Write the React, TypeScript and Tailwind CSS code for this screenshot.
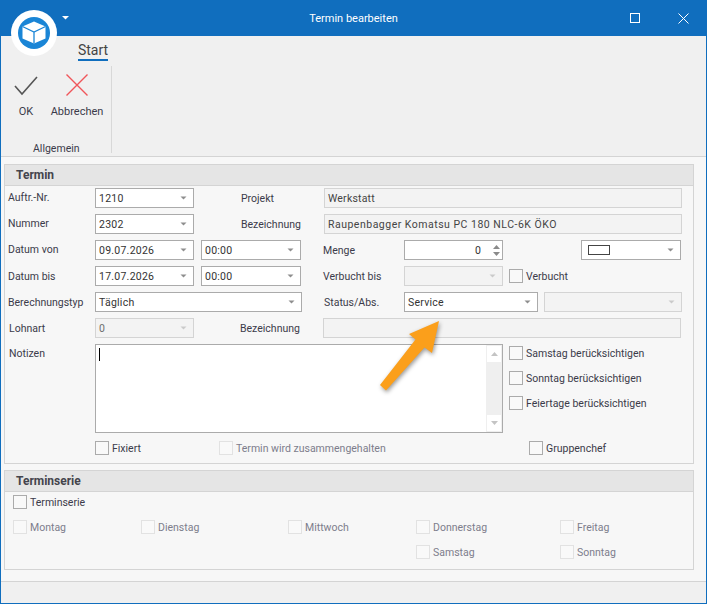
import React from "react";

const Arrow = () => (
  <svg width="8" height="4" viewBox="0 0 8 4" className="shrink-0">
    <path d="M.5.500h6L3.500 3.500z" fill="#8e8e8e" />
  </svg>
);

const Combo = ({
  w,
  value = "",
  disabled = false,
  children,
}: {
  w: string;
  value?: string;
  disabled?: boolean;
  children?: React.ReactNode;
}) => (
  <div
    className={`${w} h-5 shrink-0 flex items-center justify-between pl-[3px] pr-[5px] border tracking-[0.25px] ${
      disabled ? "border-[#d4d4d4] bg-[#f3f3f3] text-[#6d6d6d]" : "border-[#ababab] bg-white text-[#333]"
    }`}
  >
    {children ?? <span className="pt-[2px]">{value}</span>}
    <span className={disabled ? "opacity-40" : ""}>
      <Arrow />
    </span>
  </div>
);

const ReadOnly = ({ w, value = "", wide = false }: { w: string; value?: string; wide?: boolean }) => (
  <div
    className={`${w} h-5 shrink-0 flex items-center px-[3px] border border-[#d4d4d4] bg-[#f3f3f3] text-[#444] ${
      wide ? "tracking-[0.5px]" : "tracking-[0.2px]"
    }`}
  >
    <span className="pt-[2px]">{value}</span>
  </div>
);

const Check = ({ label, disabled = false, w = "" }: { label: string; disabled?: boolean; w?: string }) => (
  <div className={`${w} flex items-center gap-[3px] ${disabled ? "text-[#7d7d8c]" : "text-[#3b3b4a]"}`}>
    <span className={`w-[14px] h-[14px] shrink-0 border ${disabled ? "border-[#e2e2e2] bg-[#f9f9f9]" : "border-[#ababab] bg-[#f9f9f9]"}`} />
    <span className="pt-[2px]">{label}</span>
  </div>
);

const Label = ({ w, text }: { w: string; text: string }) => <span className={`${w} shrink-0 text-[#3b3b4a]`}>{text}</span>;

const SectionHead = ({ title }: { title: string }) => (
  <div className="h-[21px] pl-[11px] flex items-center bg-[#e5e5e5] border-b border-[#d4d4d4] text-[12px] font-bold text-[#44444c]">{title}</div>
);

export default function App() {
  return (
    <div
      className="relative w-[707px] h-[604px] overflow-hidden flex flex-col bg-[#f7f7f7] border-x border-b border-[#106ebe] text-[10.5px] leading-none"
      style={{ fontFamily: "Roboto, Tahoma, sans-serif" }}
    >
      {/* title bar */}
      <div className="h-9 shrink-0 -mx-px bg-[#106ebe] text-white text-[11px] flex items-center justify-center relative">
        <span>Termin bearbeiten</span>
        <svg width="8" height="4" viewBox="0 0 8 4" className="absolute left-[62px] top-4">
          <path d="M0 0h7L3.5 3.5z" fill="#fff" />
        </svg>
        <span className="absolute left-[630px] top-[13px] w-[10px] h-[10px] border border-white" />
        <svg width="11" height="11" viewBox="0 0 11 11" className="absolute left-[678px] top-[13px]">
          <path d="M.5.5l10 10M10.500.5l-10 10" stroke="#fff" strokeWidth="1" />
        </svg>
      </div>

      {/* ribbon */}
      <div className="h-[121px] shrink-0 bg-[#f0f0f0] border-b border-[#d4d4d4] relative">
        <div className="ml-[77px] w-[30px] h-[25px] flex flex-col items-center justify-end">
          <span className="text-[14px] text-[#444] mb-[2px]">Start</span>
          <span className="w-full h-[2px] bg-[#106ebe]" />
        </div>
        <div className="flex mt-[5px]">
          <div className="w-[111px] h-[87px] border-r border-[#d8d8d8] flex flex-col">
            <div className="flex pl-[13px] pt-[9px] gap-[13px] items-start text-[11px]">
              <div className="w-6 flex flex-col items-center gap-[10px]">
                <svg width="24" height="21" viewBox="0 0 24 21">
                  <path d="M1 11l7 8L23 2" fill="none" stroke="#555" strokeWidth="1.6" />
                </svg>
                <span className="text-[#3b3b4a]">OK</span>
              </div>
              <div className="w-[52px] flex flex-col items-center gap-[10px] -mt-[1px]">
                <svg width="22" height="22" viewBox="0 0 22 22">
                  <path d="M.5.5l21 21M21.500.5l-21 21" fill="none" stroke="#f0555a" strokeWidth="1.4" />
                </svg>
                <span className="text-[#3b3b4a]">Abbrechen</span>
              </div>
            </div>
            <span className="mt-auto -mb-[1px] ml-[32px] text-[#3b3b4a]">Allgemein</span>
          </div>
        </div>
      </div>

      {/* content */}
      <div className="flex-1 flex flex-col px-[3px] pt-[7px] gap-[6px]">
        <div className="w-[690px] h-[300px] border border-[#d4d4d4] flex flex-col">
          <SectionHead title="Termin" />
          <div className="pl-[3px] pt-[2px] flex flex-col gap-[6px]">
            <div className="flex items-center">
              <Label w="w-[87px]" text="Auftr.-Nr." />
              <Combo w="w-[99px]" value="1210" />
              <span className="ml-[47px] w-[83px] pt-[2px] shrink-0 text-[#3b3b4a]">Projekt</span>
              <ReadOnly w="w-[358px]" value="Werkstatt" />
            </div>
            <div className="flex items-center">
              <Label w="w-[87px]" text="Nummer" />
              <Combo w="w-[99px]" value="2302" />
              <span className="ml-[47px] w-[83px] pt-[2px] shrink-0 text-[#3b3b4a]">Bezeichnung</span>
              <ReadOnly w="w-[358px]" value="Raupenbagger Komatsu PC 180 NLC-6K ÖKO" wide />
            </div>
            <div className="flex items-center">
              <Label w="w-[87px]" text="Datum von" />
              <Combo w="w-[99px]" value="09.07.2026" />
              <span className="w-[7px]" />
              <Combo w="w-[100px]" value="00:00" />
              <span className="ml-[22px] w-[81px] pt-[2px] shrink-0 text-[#3b3b4a]">Menge</span>
              <div className="w-[99px] h-5 shrink-0 flex items-center justify-end border border-[#ababab] bg-white text-[#333]">
                <span className="mr-[9px] pt-[2px]">0</span>
                <span className="w-3 flex flex-col gap-[3px] items-center">
                  <svg width="7" height="4" viewBox="0 0 7 4"><path d="M0 4h7L3.500 0z" fill="#8a8a8a" /></svg>
                  <svg width="7" height="4" viewBox="0 0 7 4"><path d="M0 0h7L3.500 4z" fill="#8a8a8a" /></svg>
                </span>
              </div>
              <span className="w-[78px] shrink-0" />
              <Combo w="w-[100px]">
                <span className="ml-[3px] w-[22px] h-[10px] border border-[#444] bg-white" />
              </Combo>
            </div>
            <div className="flex items-center">
              <Label w="w-[87px] pt-[2px]" text="Datum bis" />
              <Combo w="w-[99px]" value="17.07.2026" />
              <span className="w-[7px]" />
              <Combo w="w-[100px]" value="00:00" />
              <span className="ml-[22px] w-[81px] pt-[2px] shrink-0 text-[#3b3b4a]">Verbucht bis</span>
              <Combo w="w-[99px]" disabled />
              <span className="w-[6px]" />
              <Check label="Verbucht" />
            </div>
            <div className="flex items-center">
              <Label w="w-[87px] pt-[2px]" text="Berechnungstyp" />
              <Combo w="w-[207px]" value="Täglich" />
              <span className="ml-[22px] w-[80px] pt-[2px] shrink-0 text-[#3b3b4a]">Status/Abs.</span>
              <Combo w="w-[134px]" value="Service" />
              <span className="w-[6px]" />
              <Combo w="w-[138px]" disabled />
            </div>
            <div className="flex items-center">
              <span className="w-[87px] pl-px pt-[2px] shrink-0 text-[#3b3b4a]">Lohnart</span>
              <Combo w="w-[99px]" value="0" disabled />
              <span className="ml-[46px] w-[83px] pt-[2px] shrink-0 text-[#3b3b4a]">Bezeichnung</span>
              <ReadOnly w="w-[358px]" />
            </div>
            <div className="flex">
              <span className="w-[87px] pl-px shrink-0 text-[#3b3b4a] pt-[5px]">Notizen</span>
              <div className="w-[408px] h-[89px] shrink-0 border border-[#ababab] bg-white flex justify-between">
                <span className="ml-[3px] mt-[3px] w-px h-[13px] bg-black" />
                <div className="w-[16px] bg-[#efefef] flex flex-col justify-between">
                  <span className="h-[16px] bg-white m-px flex items-center justify-center">
                    <svg width="7" height="4" viewBox="0 0 7 4"><path d="M0 4h7L3.500 0z" fill="#c4c4c4" /></svg>
                  </span>
                  <span className="h-[16px] bg-white m-px flex items-center justify-center">
                    <svg width="7" height="4" viewBox="0 0 7 4"><path d="M0 0h7L3.500 4z" fill="#c4c4c4" /></svg>
                  </span>
                </div>
              </div>
              <div className="ml-[6px] pt-[2px] flex flex-col gap-[11px]">
                <Check label="Samstag berücksichtigen" />
                <Check label="Sonntag berücksichtigen" />
                <Check label="Feiertage berücksichtigen" />
              </div>
            </div>
            <div className="flex items-center mt-[2px] pl-[87px]">
              <Check w="w-[124px]" label="Fixiert" />
              <Check w="w-[310px]" label="Termin wird zusammengehalten" disabled />
              <Check label="Gruppenchef" />
            </div>
          </div>
        </div>

        <div className="w-[690px] h-[100px] border border-[#d4d4d4] flex flex-col">
          <SectionHead title="Terminserie" />
          <div className="pl-[8px] pt-[3px] flex flex-col gap-[11px]">
            <Check label="Terminserie" />
            <div className="flex">
              <Check w="w-[128px]" label="Montag" disabled />
              <Check w="w-[147px]" label="Dienstag" disabled />
              <Check w="w-[128px]" label="Mittwoch" disabled />
              <Check w="w-[144px]" label="Donnerstag" disabled />
              <Check label="Freitag" disabled />
            </div>
            <div className="flex pl-[403px]">
              <Check w="w-[144px]" label="Samstag" disabled />
              <Check label="Sonntag" disabled />
            </div>
          </div>
        </div>
      </div>

      {/* status bar */}
      <div className="h-[22px] shrink-0 bg-[#f0f0f0] border-t border-[#d4d4d4]" />

      {/* logo over title bar and ribbon */}
      <svg width="46" height="46" viewBox="0 0 46 46" className="absolute left-[10px] top-[10px]">
        <circle cx="23" cy="23" r="23" fill="#fff" />
        <circle cx="23" cy="23" r="16" fill="#1a85d6" />
        <path d="M23 11.500l11.500 5v12l-11.500 5-11.500-5v-12z" fill="#fff" />
        <path d="M11.500 16.500l11.500 5.500 11.500-5.500M23 22v11.500" fill="none" stroke="#1a85d6" strokeWidth="1.3" />
      </svg>

      {/* arrow annotation */}
      <svg
        width="80"
        height="90"
        viewBox="0 0 80 90"
        className="absolute left-[370px] top-[310px] drop-shadow-[1px_2px_2px_rgba(0,0,0,0.4)]"
      >
        <path d="M68 11L38 24l6.500 5.500L9 75l6 5.500 38.500-43 7.500 5.500z" fill="#fb9f1b" />
      </svg>
    </div>
  );
}
